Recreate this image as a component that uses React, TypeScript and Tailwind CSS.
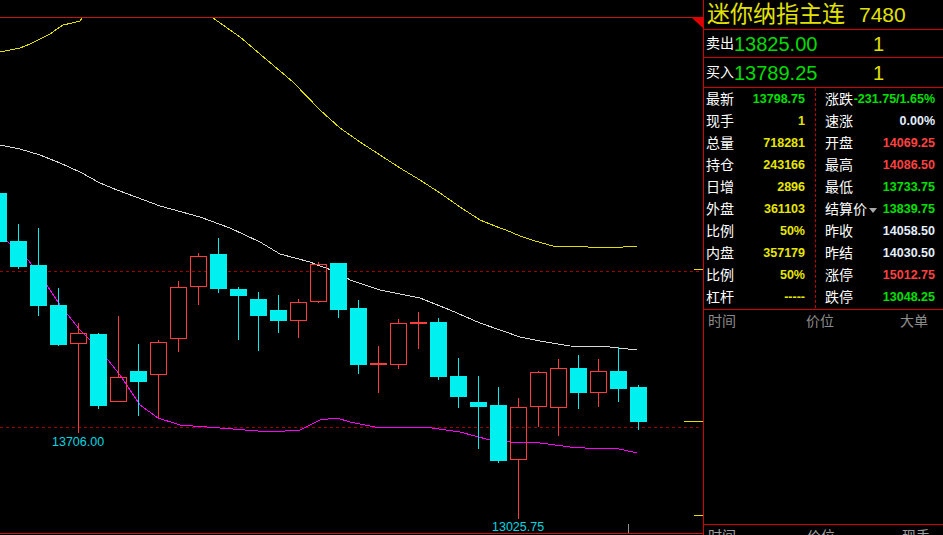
import React from 'react';

// bodyTop, bodyBottom, high, low, up (red hollow)
type Candle = [number, number, number, number, boolean];

const candles: Candle[] = [
  [193, 242, 193, 242, false],
  [241, 267, 224, 269, false],
  [265, 306, 228, 316, false],
  [305, 345, 288, 346, false],
  [333, 344, 323, 433, true],
  [334, 406, 333, 409, false],
  [377, 402, 316, 402, true],
  [371, 382, 344, 416, false],
  [342, 375, 340, 418, true],
  [287, 339, 281, 352, true],
  [256, 287, 253, 305, true],
  [254, 289, 238, 293, false],
  [289, 296, 287, 340, false],
  [299, 316, 292, 351, false],
  [310, 321, 295, 333, false],
  [302, 321, 299, 338, true],
  [264, 302, 262, 303, true],
  [263, 310, 263, 318, false],
  [308, 365, 300, 374, false],
  [363, 365, 346, 393, true],
  [323, 365, 319, 369, true],
  [322, 324, 312, 349, true],
  [322, 377, 318, 380, false],
  [376, 397, 358, 408, false],
  [402, 407, 376, 449, false],
  [405, 461, 387, 463, false],
  [407, 460, 398, 519, true],
  [372, 407, 371, 427, true],
  [368, 408, 359, 436, true],
  [368, 393, 355, 409, false],
  [371, 393, 359, 407, true],
  [371, 389, 347, 402, false],
  [387, 422, 385, 430, false],
];

const CYAN = '#00f0f0';
const RED = '#ff3c3c';

const yellowLeft = '0,52 10,50 20,48 30,44 40,39 50,34 57,29 63,25 72,23 80,21 84,15';
const yellowRight =
  '210,14 213,18 240,37 267,60 293,82 320,110 340,128 360,142 380,155 400,168 420,180 440,193 460,207 480,220 500,228 506,230 520,236 535,241 553,246 588,247 610,248 637,246';
const whiteMa =
  '0,145 20,149 40,155 60,163 80,172 100,183 117,190 144,200 160,206 200,217 230,228 260,242 280,254 310,262 320,266 340,273 350,280 380,290 420,298 450,310 480,323 500,330 520,337 540,341 570,346 610,347 637,350';
const magentaMa =
  '0,237 20,250 40,275 60,305 80,330 100,350 120,375 140,405 158,418 180,425 220,428 270,432 300,430 320,420 337,418 350,422 375,427 425,427 460,432 490,440 510,442 540,443 570,447 600,449 615,448 637,453';

function Chart() {
  return (
    <svg width={703} height={535} className="block">
      <defs>
        <clipPath id="plot">
          <rect x={0} y={18} width={703} height={514} />
        </clipPath>
      </defs>
      <line x1={0} y1={17.5} x2={703} y2={17.5} stroke="#c8140a" />
      <polygon points="691,17 703,17 703,28" fill="#e00000" />
      <line x1={0} y1={271.5} x2={700} y2={271.5} stroke="#a00000" strokeDasharray="3 3" />
      <line x1={0} y1={427.5} x2={700} y2={427.5} stroke="#a00000" strokeDasharray="3 3" />
      <g clipPath="url(#plot)" shapeRendering="crispEdges">
        <polyline points={yellowLeft} fill="none" stroke="#e0e000" />
        <polyline points={yellowRight} fill="none" stroke="#e0e000" />
        <polyline points={whiteMa} fill="none" stroke="#d8d8d8" />
        <polyline points={magentaMa} fill="none" stroke="#ff00ff" />
        {candles.map(([t, b, hi, lo, up], i) => {
          const x = -10 + i * 20;
          const cx = x + 8.5;
          if (up && b - t <= 3) {
            return (
              <g key={i}>
                <line x1={cx} y1={hi} x2={cx} y2={lo} stroke={RED} />
                <rect x={x} y={t} width={17} height={b - t} fill={RED} />
              </g>
            );
          }
          if (up) {
            return (
              <g key={i}>
                <line x1={cx} y1={hi} x2={cx} y2={t} stroke={RED} />
                <line x1={cx} y1={b} x2={cx} y2={lo} stroke={RED} />
                <rect x={x + 0.5} y={t + 0.5} width={16} height={b - t - 1} fill="none" stroke={RED} />
              </g>
            );
          }
          return (
            <g key={i}>
              <line x1={cx} y1={hi} x2={cx} y2={lo} stroke={CYAN} />
              <rect x={x} y={t} width={17} height={b - t} fill={CYAN} />
            </g>
          );
        })}
      </g>
      <text x={52} y={446} fill="#00d8e0" fontSize={12.5} fontFamily="Liberation Sans, sans-serif">
        13706.00
      </text>
      <text x={492} y={531} fill="#00d8e0" fontSize={12.5} fontFamily="Liberation Sans, sans-serif">
        13025.75
      </text>
      <line x1={694} y1={269.5} x2={703} y2={269.5} stroke="#e0e000" />
      <line x1={684} y1={421.5} x2={703} y2={421.5} stroke="#e0e000" />
      <line x1={694} y1={515.5} x2={703} y2={515.5} stroke="#e0e000" />
      <line x1={628.5} y1={524} x2={628.5} y2={533} stroke="#909090" />
      <line x1={0} y1={533.5} x2={703} y2={533.5} stroke="#c8140a" />
    </svg>
  );
}

const GREEN = 'text-[#00e000]';
const YELLOW = 'text-[#e6e600]';
const REDT = 'text-[#ff4040]';
const WHITE = 'text-[#e4eeff]';

const leftRows: [string, string, string][] = [
  ['最新', '13798.75', GREEN],
  ['现手', '1', YELLOW],
  ['总量', '718281', YELLOW],
  ['持仓', '243166', YELLOW],
  ['日增', '2896', YELLOW],
  ['外盘', '361103', YELLOW],
  ['比例', '50%', YELLOW],
  ['内盘', '357179', YELLOW],
  ['比例', '50%', YELLOW],
  ['杠杆', '-----', YELLOW],
];

const rightRows: [string, string, string][] = [
  ['涨跌', '-231.75/1.65%', GREEN],
  ['速涨', '0.00%', WHITE],
  ['开盘', '14069.25', REDT],
  ['最高', '14086.50', REDT],
  ['最低', '13733.75', GREEN],
  ['结算价', '13839.75', GREEN],
  ['昨收', '14058.50', WHITE],
  ['昨结', '14030.50', WHITE],
  ['涨停', '15012.75', REDT],
  ['跌停', '13048.25', GREEN],
];

function QuotePanel() {
  return (
    <div className="flex w-[240px] shrink-0 flex-col border-l border-[#d20000]">
      <div className="flex h-[30px] shrink-0 items-center border-b border-[#d20000] pl-[3px] text-[#e2e200]">
        <span className="text-[23px] leading-none">迷你纳指主连</span>
        <span className="ml-[14px] text-[21px] leading-none">7480</span>
      </div>
      <div className="flex h-[28px] shrink-0 items-center border-b border-[#d20000] pl-[2px]">
        <span className="w-[28px] text-[14px] text-white">卖出</span>
        <span className="w-[139px] text-[20px] leading-none text-[#00dc00]">13825.00</span>
        <span className="text-[20px] leading-none text-[#e0e000]">1</span>
      </div>
      <div className="flex h-[30px] shrink-0 items-center border-b border-[#d20000] pl-[2px]">
        <span className="w-[28px] text-[14px] text-white">买入</span>
        <span className="w-[139px] text-[20px] leading-none text-[#00dc00]">13789.25</span>
        <span className="text-[20px] leading-none text-[#e0e000]">1</span>
      </div>
      <div className="flex h-[222px] shrink-0 border-b border-[#d20000]">
        <div className="w-[111px] shrink-0">
          {leftRows.map(([label, value, color], i) => (
            <div key={i} className="flex h-[22px] items-center justify-between pl-[2px] pr-[10px]">
              <span className="text-[14px] text-white">{label}</span>
              <span className={`text-[12.5px] font-bold ${color}`}>{value}</span>
            </div>
          ))}
        </div>
        <div className="h-[220px] flex-1 border-l border-dashed border-[#c00000]">
          {rightRows.map(([label, value, color], i) => (
            <div key={i} className="flex h-[22px] items-center pl-[9px] pr-[8px]">
              <span className="text-[14px] text-white">{label}</span>
              {label === '结算价' && (
                <span className="ml-[2px] mt-[2px] h-0 w-0 border-x-[4.5px] border-t-[5px] border-x-transparent border-t-[#a8a8a8]" />
              )}
              <span className={`ml-auto text-[12.5px] font-bold ${color}`}>{value}</span>
            </div>
          ))}
        </div>
      </div>
      <div className="h-[215px] shrink-0 border-b border-[#d20000]">
        <div className="flex h-[22px] items-center pl-[4px] text-[14px] text-[#8c8c8c]">
          <span className="w-[98px]">时间</span>
          <span className="w-[94px]">价位</span>
          <span>大单</span>
        </div>
      </div>
      <div className="flex h-[22px] shrink-0 items-center pl-[4px] text-[14px] text-[#a0a0a0]">
        <span className="w-[99px]">时间</span>
        <span className="w-[95px]">价位</span>
        <span>现手</span>
      </div>
    </div>
  );
}

export default function App() {
  return (
    <div className="flex h-[535px] w-[943px] overflow-hidden bg-black font-['Liberation_Sans','Noto_Sans_CJK_SC',sans-serif]">
      <div className="w-[703px] shrink-0">
        <Chart />
      </div>
      <QuotePanel />
    </div>
  );
}
